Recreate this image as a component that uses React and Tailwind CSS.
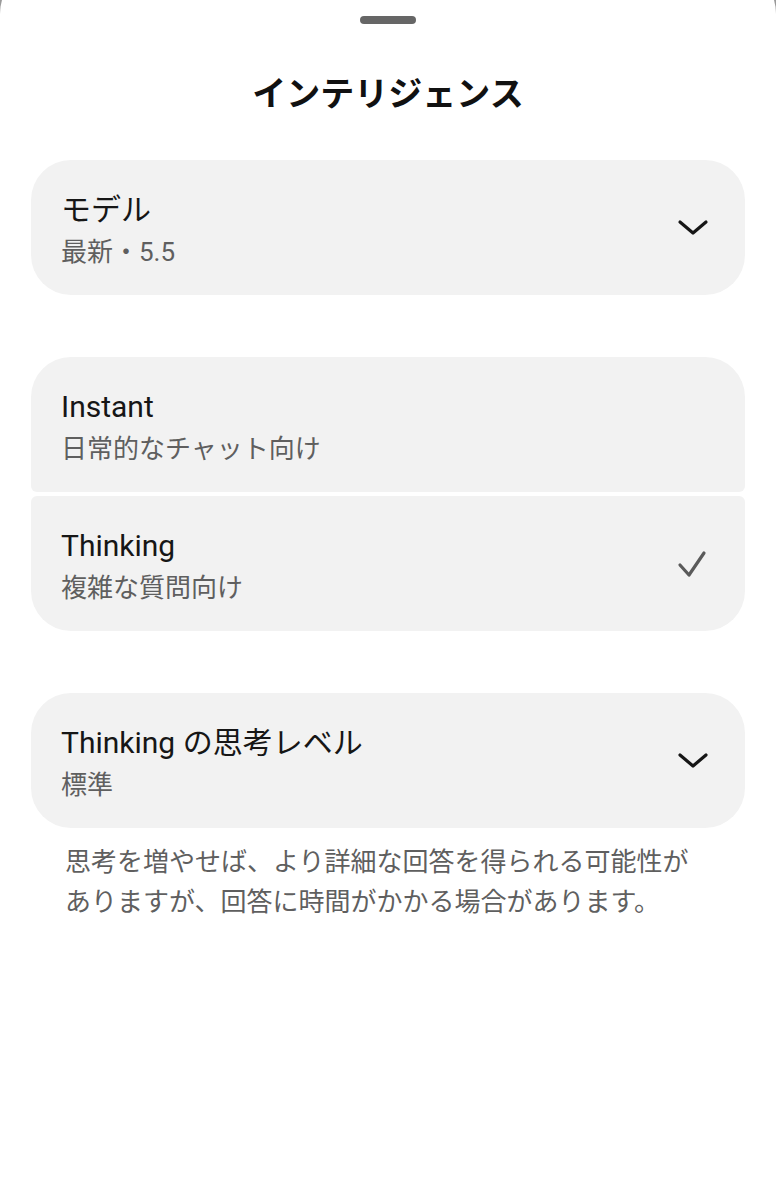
import React from 'react';

const font = "font-['Roboto','Noto_Sans_CJK_JP',sans-serif]";

const Chevron = () => (
  <svg width="32" height="19" viewBox="0 0 32 19" fill="none" stroke="#161616" strokeWidth="3.2" strokeLinecap="round" strokeLinejoin="round">
    <polyline points="3,4 16,15 29,4" />
  </svg>
);

const Check = () => (
  <svg width="32" height="30" viewBox="0 0 32 30" fill="none" stroke="#5a5a5a" strokeWidth="3.2" strokeLinecap="round" strokeLinejoin="round">
    <polyline points="3,16 12,26 27,4" />
  </svg>
);

const Row = ({ title, sub, icon, shape }) => (
  <div className={`h-[135px] flex items-center justify-between bg-[#f2f2f2] pl-[30px] pr-[36px] ${shape}`}>
    <div className="flex flex-col pt-[5px]">
      <span className="text-[30px] leading-[38px] text-[#161616]">{title}</span>
      <span className="text-[26px] leading-[36px] text-[#5f5f5f] mt-[5px]">{sub}</span>
    </div>
    {icon}
  </div>
);

export default function App() {
  return (
    <div className={`h-[1200px] overflow-hidden bg-[#9a9a9a] ${font}`}>
      <div className="-mt-[36px] h-[1236px] bg-white rounded-t-[50px] pt-[52px]">
        <div className="mx-auto w-14 h-2 rounded-full bg-[#666666]" />
        <h1 className="mt-[46px] text-center text-[34px] leading-[48px] font-bold text-[#111111]">
          インテリジェンス
        </h1>

        <div className="mt-[42px] px-[31px]">
          <Row title="モデル" sub="最新・5.5" icon={<Chevron />} shape="rounded-[40px]" />

          <div className="mt-[62px] flex flex-col gap-1">
            <Row title="Instant" sub="日常的なチャット向け" shape="rounded-t-[40px] rounded-b-[6px]" />
            <Row title="Thinking" sub="複雑な質問向け" icon={<Check />} shape="rounded-t-[6px] rounded-b-[40px]" />
          </div>

          <div className="mt-[62px]">
            <Row title="Thinking の思考レベル" sub="標準" icon={<Chevron />} shape="rounded-[40px]" />
          </div>

          <p className="mt-[14px] pl-[34px] w-[674px] text-[26px] leading-[40px] text-[#5f5f5f]">
            思考を増やせば、より詳細な回答を得られる可能性がありますが、回答に時間がかかる場合があります。
          </p>
        </div>
      </div>
    </div>
  );
}
